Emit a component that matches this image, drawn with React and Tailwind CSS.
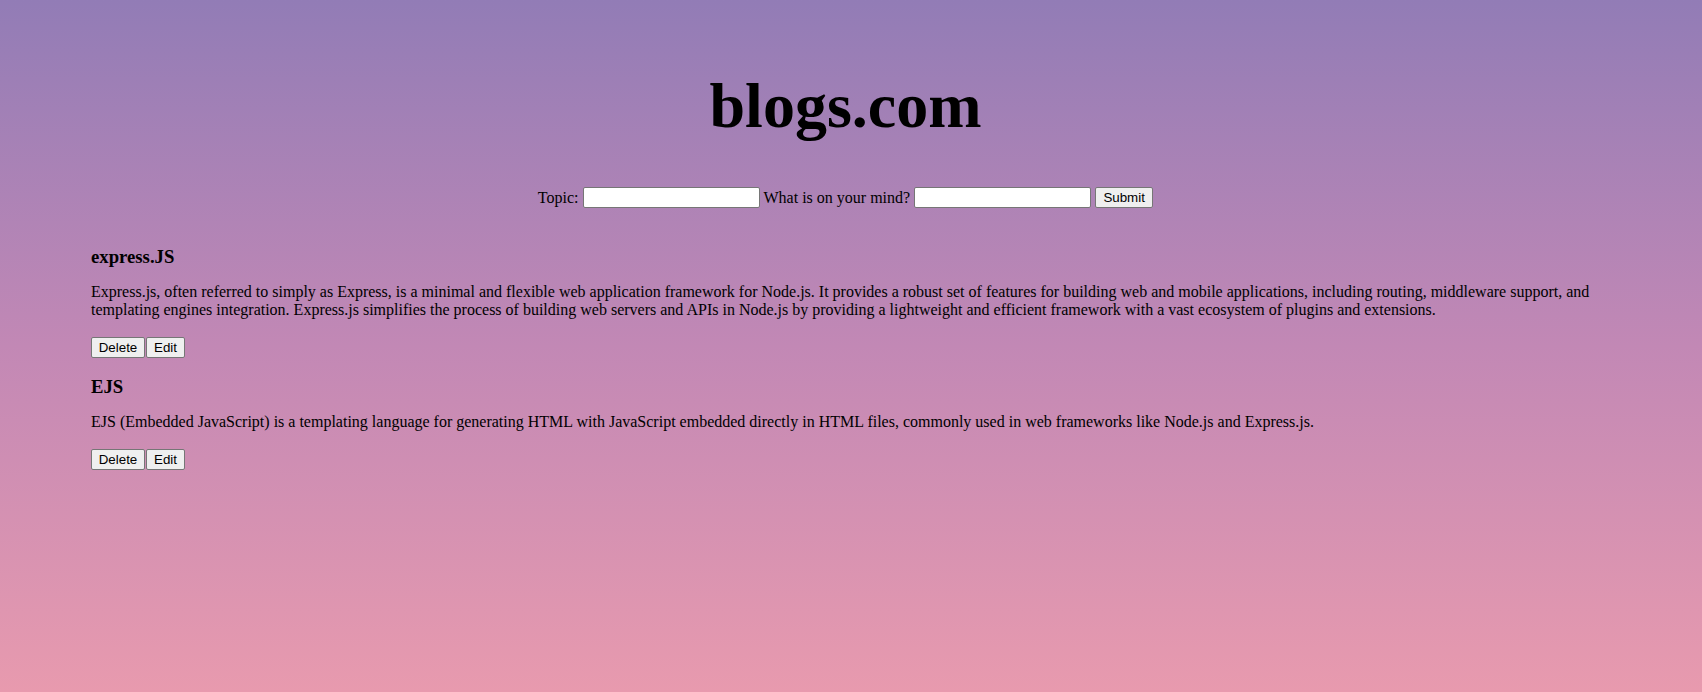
import React from "react";

const posts = [
  {
    title: "express.JS",
    body:
      "Express.js, often referred to simply as Express, is a minimal and flexible web application framework for Node.js. It provides a robust set of features for building web and mobile applications, including routing, middleware support, and templating engines integration. Express.js simplifies the process of building web servers and APIs in Node.js by providing a lightweight and efficient framework with a vast ecosystem of plugins and extensions.",
  },
  {
    title: "EJS",
    body:
      "EJS (Embedded JavaScript) is a templating language for generating HTML with JavaScript embedded directly in HTML files, commonly used in web frameworks like Node.js and Express.js.",
  },
];

function Btn({ children, w }) {
  return (
    <button
      type="button"
      className={`${w} h-[21px] box-border border border-[#767676] rounded-[2px] bg-[#efefef] text-black text-[13.33px] leading-[15px] px-0 font-['Liberation_Sans',Arial,sans-serif] text-center`}
    >
      {children}
    </button>
  );
}

function TextInput() {
  return (
    <input
      type="text"
      className="w-[177px] h-[21px] box-border border border-[#767676] rounded-[2px] bg-white text-[13.33px] px-[2px] font-['Liberation_Sans',Arial,sans-serif] outline-none"
    />
  );
}

export default function App() {
  return (
    <div className="min-h-screen w-full bg-gradient-to-b from-[#927cb6] via-[#c288b5] to-[#e89aae] text-black font-['Liberation_Serif','Times_New_Roman',serif] text-[16px]">
      <div className="pt-[69px] pr-[11px]">
        <h1 className="text-center text-[64px] leading-[74px] font-bold">blogs.com</h1>
        <form className="mt-[44px] flex items-center justify-center gap-[4px] h-[21px]">
          <span className="leading-[18px]">Topic:</span>
          <TextInput />
          <span className="leading-[18px]">What is on your mind?</span>
          <TextInput />
          <Btn w="w-[58px]">Submit</Btn>
        </form>
      </div>
      <div className="pl-[91px] pr-[102px] pt-[38px] pb-[20px]">
        {posts.map((p, i) => (
          <div key={p.title} className={i > 0 ? "mt-[18px]" : ""}>
            <h3 className="text-[18.72px] leading-[22px] font-bold">{p.title}</h3>
            <p className="mt-[15px] leading-[18px]">{p.body}</p>
            <div className="mt-[18px] flex gap-px">
              <Btn w="w-[54px]">Delete</Btn>
              <Btn w="w-[39px]">Edit</Btn>
            </div>
          </div>
        ))}
      </div>
    </div>
  );
}
